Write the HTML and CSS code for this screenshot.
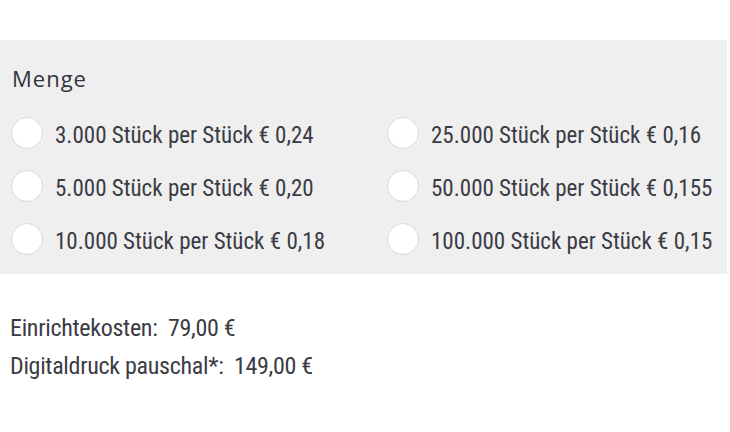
FILE: index.html
```html
<!DOCTYPE html>
<html lang="de">
<head>
    <meta charset="UTF-8">
    <title>Menge</title>
    <link rel="stylesheet" href="styles.css">
</head>
<body>
    <div class="panel">
        <h3>Menge</h3>
        <div class="options">
            <label class="option"><span class="radio"></span><span class="label">3.000 Stück per Stück € 0,24</span></label>
            <label class="option"><span class="radio"></span><span class="label">25.000 Stück per Stück € 0,16</span></label>
            <label class="option"><span class="radio"></span><span class="label">5.000 Stück per Stück € 0,20</span></label>
            <label class="option"><span class="radio"></span><span class="label">50.000 Stück per Stück € 0,155</span></label>
            <label class="option"><span class="radio"></span><span class="label">10.000 Stück per Stück € 0,18</span></label>
            <label class="option"><span class="radio"></span><span class="label">100.000 Stück per Stück € 0,15</span></label>
        </div>
    </div>
    <div class="costs">
        <p>Einrichtekosten:&nbsp; 79,00 €</p>
        <p>Digitaldruck pauschal*:&nbsp; 149,00 €</p>
    </div>
</body>
</html>
```

FILE: styles.css
```css
body {
    margin: 0;
    background: #fff;
    color: #3b3b45;
    font-family: "Roboto Condensed", "Liberation Sans Narrow", "Liberation Sans", sans-serif;
}
.panel {
    margin-top: 40px;
    width: 727px;
    background: #efefef;
    padding: 25px 0 19px 0;
    box-sizing: border-box;
}
.panel h3 {
    margin: 0 0 26px 12px;
    font-family: "Open Sans", sans-serif;
    font-weight: 500;
    font-size: 22px;
    letter-spacing: 1px;
    line-height: 26px;
    color: #33333d;
}
.options {
    display: grid;
    grid-template-columns: 376px 1fr;
    row-gap: 21px;
    padding-left: 11px;
}
.option {
    display: flex;
    align-items: center;
    gap: 12px;
    font-size: 23px;
    height: 32px;
}
.option .label {
    padding-top: 5px;
}
.radio {
    width: 30px;
    height: 30px;
    border-radius: 50%;
    background: #fff;
    border: 1px solid #d9d9d9;
    flex: none;
}
.costs {
    padding: 35px 0 0 10px;
    font-size: 24px;
    letter-spacing: -0.3px;
}
.costs p {
    margin: 0;
    line-height: 38px;
}
```
